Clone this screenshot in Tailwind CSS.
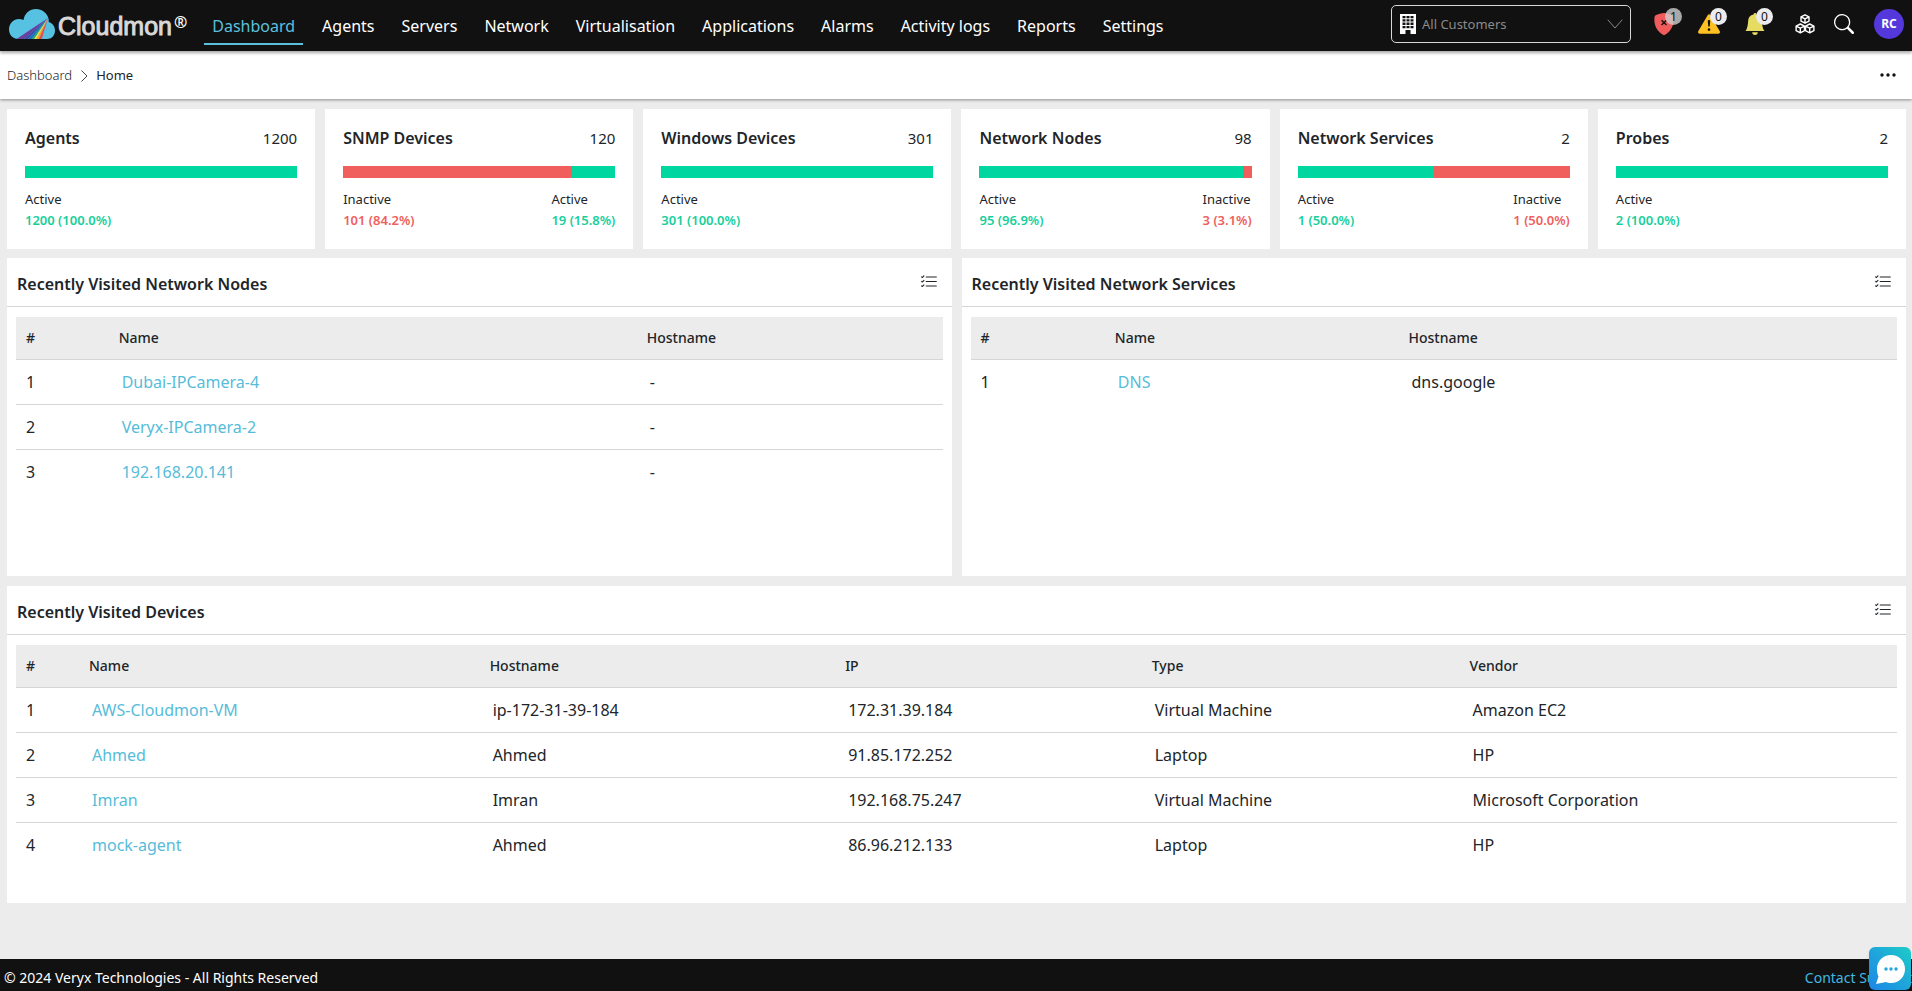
<!DOCTYPE html>
<html lang="en">
<head>
  <meta charset="UTF-8" />
  <meta name="viewport" content="width=device-width, initial-scale=1.0"/>
  <title>Cloudmon - Dashboard</title>
  <script src="https://cdn.jsdelivr.net/npm/@tailwindcss/browser@4"></script>
</head>
<body class="bg-[#ececec] min-h-screen flex flex-col text-[#212529] font-['Noto_Sans',sans-serif]">

  <!-- Shared icons -->
  <svg class="hidden">
    <symbol id="list-check" viewBox="0 0 16 16">
      <path fill="currentColor" fill-rule="evenodd" d="M5 11.5a.5.5 0 0 1 .5-.5h9a.5.5 0 0 1 0 1h-9a.5.5 0 0 1-.5-.5zm0-4a.5.5 0 0 1 .5-.5h9a.5.5 0 0 1 0 1h-9a.5.5 0 0 1-.5-.5zm0-4a.5.5 0 0 1 .5-.5h9a.5.5 0 0 1 0 1h-9a.5.5 0 0 1-.5-.5zM3.854 2.146a.5.5 0 0 1 0 .708l-1.5 1.5a.5.5 0 0 1-.708 0l-.5-.5a.5.5 0 1 1 .708-.708L2 3.293l1.146-1.147a.5.5 0 0 1 .708 0zm0 4a.5.5 0 0 1 0 .708l-1.5 1.5a.5.5 0 0 1-.708 0l-.5-.5a.5.5 0 1 1 .708-.708L2 7.293l1.146-1.147a.5.5 0 0 1 .708 0zm0 4a.5.5 0 0 1 0 .708l-1.5 1.5a.5.5 0 0 1-.708 0l-.5-.5a.5.5 0 0 1 .708-.708l.146.147 1.146-1.147a.5.5 0 0 1 .708 0z"/>
    </symbol>
  </svg>

  <!-- Top Bar -->
  <header class="relative z-20 bg-[#111] text-white h-[51px] flex items-center pl-2 pr-2 pb-[3px] shadow-[0_2px_3px_rgba(0,0,0,0.35)]">
    <a href="#" class="flex items-center shrink-0">
      <svg class="w-12 h-8" viewBox="0 0 48 32" aria-hidden="true">
        <defs>
          <clipPath id="cloud"><path d="M10.500 31C4.500 31 1 26.500 1 21.500 1 15.500 5.500 11 11 11c1.500 0 3 .3 4.500 1C16.500 5.500 21.500 1 28 1c6 0 11 4 12.500 9.500 .3 1.500.3 2.500.2 3.500C44.500 15 47 18.500 47 22.500 47 27.500 43.500 31 39 31Z"/></clipPath>
        </defs>
        <g clip-path="url(#cloud)">
          <rect width="48" height="32" fill="#56c1e0"/>
          <path d="M40 10 7 32h8z" fill="#6b3fa0"/>
          <path d="M40 10 15 32h4z" fill="#4148a5"/>
          <path d="M40 10 19 32h4z" fill="#1f6fc0"/>
          <path d="M40 10 23 32h2.500z" fill="#2aa56b"/>
          <path d="M40 10 25.500 32h2.500z" fill="#f0e04a"/>
          <path d="M40 10 28 32h2.500z" fill="#f6a12c"/>
          <path d="M40 10 30.500 32h3z" fill="#ea4a50"/>
        </g>
      </svg>
      <span class="ml-[2px] pt-1 text-[25px] leading-8 text-[#d8d8d8] font-['Liberation_Sans',sans-serif] [-webkit-text-stroke:1px_#d8d8d8]">Cloudmon</span>
      <span class="ml-[2px] text-[16px] leading-4 font-semibold pb-1">®</span>
    </a>

    <nav class="flex gap-[11px] ml-[17px] pt-[2px] text-[16px] leading-6 whitespace-nowrap">
      <a href="#" class="px-2 pt-2 pb-[5px] border-b-2 border-[#5bc0de] text-[#5bc0de]">Dashboard</a>
      <a href="#" class="px-2 pt-2 hover:text-[#5bc0de]">Agents</a>
      <a href="#" class="px-2 pt-2 hover:text-[#5bc0de]">Servers</a>
      <a href="#" class="px-2 pt-2 hover:text-[#5bc0de]">Network</a>
      <a href="#" class="px-2 pt-2 hover:text-[#5bc0de]">Virtualisation</a>
      <a href="#" class="px-2 pt-2 hover:text-[#5bc0de]">Applications</a>
      <a href="#" class="px-2 pt-2 hover:text-[#5bc0de]">Alarms</a>
      <a href="#" class="px-2 pt-2 hover:text-[#5bc0de]">Activity logs</a>
      <a href="#" class="px-2 pt-2 hover:text-[#5bc0de]">Reports</a>
      <a href="#" class="px-2 pt-2 hover:text-[#5bc0de]">Settings</a>
    </nav>

    <div class="ml-auto flex items-center shrink-0">
      <!-- Customer picker -->
      <div class="relative">
        <svg class="absolute left-2 top-[9px] w-[18px] h-5 pointer-events-none" viewBox="0 0 18 20" aria-hidden="true">
          <path d="M1 0h16v20h-5.500v-4h-5v4H1z" fill="#fff"/>
          <path d="M3.500 2h3v2.300h-3zm4 0h3v2.300h-3zm4 0h3v2.300h-3zM3.500 5.300h3v2.300h-3zm4 0h3v2.300h-3zm4 0h3v2.300h-3zM3.500 8.600h3v2.300h-3zm4 0h3v2.300h-3zm4 0h3v2.300h-3zM3.500 11.900h3v2.300h-3zm4 0h3v2.300h-3zm4 0h3v2.300h-3z" fill="#111"/>
        </svg>
        <select aria-label="Customer" class="appearance-none w-60 h-[38px] pl-[30px] pr-8 pt-[2px] rounded-[5px] border border-[#d8d8d8] bg-[#111] text-[13px] text-[#8a8a8a]">
          <option>All Customers</option>
        </select>
        <svg class="absolute right-2 top-[11px] w-4 h-4 pointer-events-none" viewBox="0 0 16 16" fill="none" stroke="#8a8a8a" stroke-linecap="round" stroke-linejoin="round" aria-hidden="true"><path d="M1 4l7 8 7-8"/></svg>
      </div>

      <!-- Status counters -->
      <button type="button" aria-label="Critical alarms" class="relative ml-[22px] w-[22px] h-[22px]">
        <svg class="w-[22px] h-[22px]" viewBox="0 0 16 16" aria-hidden="true">
          <path fill="#f05c5c" d="M8 0c-.69 0-1.843.265-2.928.56-1.110.3-2.229.655-2.887.870a1.540 1.540 0 0 0-1.044 1.262c-.596 4.477.787 7.795 2.465 9.990a11.777 11.777 0 0 0 2.517 2.453c.386.273.744.482 1.048.625.280.132.581.240.829.240s.548-.108.829-.240a7.159 7.159 0 0 0 1.048-.625 11.775 11.775 0 0 0 2.517-2.453c1.678-2.195 3.061-5.513 2.465-9.990a1.541 1.541 0 0 0-1.044-1.263 62.467 62.467 0 0 0-2.887-.870C9.843.266 8.690 0 8 0z"/>
          <path stroke="#111" d="M6.200 5.200l3.600 3.600m0-3.600L6.200 8.800"/>
        </svg>
        <span class="absolute -top-[5px] left-[12px] w-[17px] h-[17px] rounded-full bg-[#d0d0d0]/80 text-[#111] text-[12px] leading-[17px] text-center">1</span>
      </button>
      <button type="button" aria-label="Warnings" class="relative ml-[23px] w-[22px] h-[22px]">
        <svg class="w-[22px] h-[22px]" viewBox="0 0 16 16" aria-hidden="true">
          <path fill="#ffc021" d="M8.982 1.566a1.130 1.130 0 0 0-1.960 0L.165 13.233c-.457.778.091 1.767.980 1.767h13.713c.889 0 1.438-.990.980-1.767L8.982 1.566z"/>
          <path fill="#111" d="M8 5c.535 0 .954.462.900.995l-.350 3.507a.552.552 0 0 1-1.100 0L7.100 5.995A.905.905 0 0 1 8 5zm.002 6a1 1 0 1 1 0 2 1 1 0 0 1 0-2z"/>
        </svg>
        <span class="absolute -top-[5px] left-[12px] w-[17px] h-[17px] rounded-full bg-[#ececec] text-[#111] text-[12px] leading-[17px] text-center">0</span>
      </button>
      <button type="button" aria-label="Notifications" class="relative ml-6 w-[22px] h-[22px]">
        <svg class="w-[22px] h-[22px]" viewBox="0 0 16 16" fill="#e6dc61" aria-hidden="true"><path d="M8 16a2 2 0 0 0 2-2H6a2 2 0 0 0 2 2zm.995-14.901a1 1 0 1 0-1.990 0A5.002 5.002 0 0 0 3 6c0 1.098-.500 6-2 7h14c-1.500-1-2-5.902-2-7 0-2.420-1.720-4.440-4.005-4.901z"/></svg>
        <span class="absolute -top-[5px] left-[12px] w-[17px] h-[17px] rounded-full bg-[#ececec] text-[#111] text-[12px] leading-[17px] text-center">0</span>
      </button>
      <button type="button" aria-label="Modules" class="ml-[29px]">
        <svg class="w-5 h-5" viewBox="0 0 20 20" fill="none" stroke="#fff" stroke-width="1.400" stroke-linejoin="round" aria-hidden="true">
          <path d="M10 .8l4 2v4.400l-4 2-4-2V2.800zM6 2.800l4 2 4-2M10 4.800v4.400"/>
          <path d="M5.300 10l4.200 2.100v4.600l-4.200 2.200-4.200-2.200v-4.600zM1.100 12.100l4.200 2.100 4.200-2.100M5.300 14.200v4.700"/>
          <path d="M14.700 10l4.200 2.100v4.600l-4.200 2.200-4.200-2.200v-4.600zM10.500 12.100l4.200 2.100 4.200-2.100M14.700 14.200v4.700"/>
        </svg>
      </button>
      <button type="button" aria-label="Search" class="ml-[19px]">
        <svg class="w-5 h-5" viewBox="0 0 16 16" fill="#fff" aria-hidden="true"><path d="M11.742 10.344a6.500 6.500 0 1 0-1.397 1.398h-.001c.030.040.062.078.098.115l3.850 3.850a1 1 0 0 0 1.415-1.414l-3.850-3.850a1.007 1.007 0 0 0-.115-.100zM12 6.500a5.500 5.500 0 1 1-11 0 5.500 5.500 0 0 1 11 0z"/></svg>
      </button>
      <button type="button" aria-label="Account" class="ml-5 w-[30px] h-[30px] rounded-full bg-[#5438dc] text-[12px] font-bold">RC</button>
    </div>
  </header>

  <!-- Breadcrumb -->
  <div class="relative z-10 bg-white h-12 flex items-center justify-between pl-[7px] pr-4 text-[13px] shadow-[0_1px_3px_rgba(0,0,0,0.4)]">
    <nav class="flex items-center pt-px">
      <a href="#" class="font-light">Dashboard</a>
      <svg class="w-3 h-3 mx-[6px]" viewBox="0 0 12 12" fill="none" stroke="#444" aria-hidden="true"><path d="M3.500.5L9 6l-5.500 5.500"/></svg>
      <span>Home</span>
    </nav>
    <button type="button" aria-label="More">
      <svg class="w-4 h-4" viewBox="0 0 16 16" fill="#111" aria-hidden="true"><circle cx="2" cy="8" r="1.700"/><circle cx="8" cy="8" r="1.700"/><circle cx="14" cy="8" r="1.700"/></svg>
    </button>
  </div>

  <main class="pt-[10px] pb-14 pl-[7px] pr-[6px]">
    <!-- Summary Cards -->
    <div class="grid grid-cols-6 gap-[10px]">
      <section class="bg-white px-[18px] pt-[18px] pb-[19px]">
        <div class="flex justify-between text-[16px] leading-[22px]"><h2 class="font-semibold">Agents</h2><span class="text-[15px]">1200</span></div>
        <div class="flex h-3 mt-[17px]"><div class="bg-[#00d69f]" style="width:100%"></div></div>
        <div class="flex justify-between mt-[10px] text-[13px]">
          <div><p class="leading-[22px]">Active</p><p class="leading-5 font-semibold text-[#18cf9c]">1200 (100.0%)</p></div>
        </div>
      </section>
      <section class="bg-white px-[18px] pt-[18px] pb-[19px]">
        <div class="flex justify-between text-[16px] leading-[22px]"><h2 class="font-semibold">SNMP Devices</h2><span class="text-[15px]">120</span></div>
        <div class="flex h-3 mt-[17px]"><div class="bg-[#f05f5c]" style="width:84.2%"></div><div class="bg-[#00d69f]" style="width:15.8%"></div></div>
        <div class="flex justify-between mt-[10px] text-[13px]">
          <div><p class="leading-[22px]">Inactive</p><p class="leading-5 font-semibold text-[#f05f5c]">101 (84.2%)</p></div>
          <div><p class="leading-[22px]">Active</p><p class="leading-5 font-semibold text-[#18cf9c]">19 (15.8%)</p></div>
        </div>
      </section>
      <section class="bg-white px-[18px] pt-[18px] pb-[19px]">
        <div class="flex justify-between text-[16px] leading-[22px]"><h2 class="font-semibold">Windows Devices</h2><span class="text-[15px]">301</span></div>
        <div class="flex h-3 mt-[17px]"><div class="bg-[#00d69f]" style="width:100%"></div></div>
        <div class="flex justify-between mt-[10px] text-[13px]">
          <div><p class="leading-[22px]">Active</p><p class="leading-5 font-semibold text-[#18cf9c]">301 (100.0%)</p></div>
        </div>
      </section>
      <section class="bg-white px-[18px] pt-[18px] pb-[19px]">
        <div class="flex justify-between text-[16px] leading-[22px]"><h2 class="font-semibold">Network Nodes</h2><span class="text-[15px]">98</span></div>
        <div class="flex h-3 mt-[17px]"><div class="bg-[#00d69f]" style="width:96.9%"></div><div class="bg-[#f05f5c]" style="width:3.1%"></div></div>
        <div class="flex justify-between mt-[10px] text-[13px]">
          <div><p class="leading-[22px]">Active</p><p class="leading-5 font-semibold text-[#18cf9c]">95 (96.9%)</p></div>
          <div><p class="leading-[22px]">Inactive</p><p class="leading-5 font-semibold text-[#f05f5c]">3 (3.1%)</p></div>
        </div>
      </section>
      <section class="bg-white px-[18px] pt-[18px] pb-[19px]">
        <div class="flex justify-between text-[16px] leading-[22px]"><h2 class="font-semibold">Network Services</h2><span class="text-[15px]">2</span></div>
        <div class="flex h-3 mt-[17px]"><div class="bg-[#00d69f]" style="width:50%"></div><div class="bg-[#f05f5c]" style="width:50%"></div></div>
        <div class="flex justify-between mt-[10px] text-[13px]">
          <div><p class="leading-[22px]">Active</p><p class="leading-5 font-semibold text-[#18cf9c]">1 (50.0%)</p></div>
          <div><p class="leading-[22px]">Inactive</p><p class="leading-5 font-semibold text-[#f05f5c]">1 (50.0%)</p></div>
        </div>
      </section>
      <section class="bg-white px-[18px] pt-[18px] pb-[19px]">
        <div class="flex justify-between text-[16px] leading-[22px]"><h2 class="font-semibold">Probes</h2><span class="text-[15px]">2</span></div>
        <div class="flex h-3 mt-[17px]"><div class="bg-[#00d69f]" style="width:100%"></div></div>
        <div class="flex justify-between mt-[10px] text-[13px]">
          <div><p class="leading-[22px]">Active</p><p class="leading-5 font-semibold text-[#18cf9c]">2 (100.0%)</p></div>
        </div>
      </section>
    </div>

    <div class="grid grid-cols-2 gap-[10px] mt-[9px]">
      <!-- Recently Visited Network Nodes -->
      <section class="bg-white min-h-[318px]">
        <div class="flex items-center justify-between h-[49px] pl-[10px] pr-[14px] border-b border-[#d6d6d6]">
          <h2 class="text-[16px] leading-6 font-semibold pt-1">Recently Visited Network Nodes</h2>
          <button type="button" aria-label="Choose columns"><svg class="w-[18px] h-[18px]"><use href="#list-check"/></svg></button>
        </div>
        <div class="px-[9px] pt-[10px]">
          <table class="w-full table-fixed text-left text-[16px]">
            <thead class="bg-[#ececec] text-[14px]">
              <tr class="h-[42px] border-b border-[#d6d6d6]">
                <th class="w-[10%] pl-[10px] font-medium">#</th>
                <th class="w-[57%] pl-[10px] font-medium">Name</th>
                <th class="pl-[10px] font-medium">Hostname</th>
              </tr>
            </thead>
            <tbody>
              <tr class="h-[45px] border-b border-[#d6d6d6]"><td class="pl-[10px]">1</td><td class="pl-[13px]"><a href="#" class="text-[#56bcd9]">Dubai-IPCamera-4</a></td><td class="pl-[13px]">-</td></tr>
              <tr class="h-[45px] border-b border-[#d6d6d6]"><td class="pl-[10px]">2</td><td class="pl-[13px]"><a href="#" class="text-[#56bcd9]">Veryx-IPCamera-2</a></td><td class="pl-[13px]">-</td></tr>
              <tr class="h-[45px]"><td class="pl-[10px]">3</td><td class="pl-[13px]"><a href="#" class="text-[#56bcd9]">192.168.20.141</a></td><td class="pl-[13px]">-</td></tr>
            </tbody>
          </table>
        </div>
      </section>

      <!-- Recently Visited Network Services -->
      <section class="bg-white min-h-[318px]">
        <div class="flex items-center justify-between h-[49px] pl-[10px] pr-[14px] border-b border-[#d6d6d6]">
          <h2 class="text-[16px] leading-6 font-semibold pt-1">Recently Visited Network Services</h2>
          <button type="button" aria-label="Choose columns"><svg class="w-[18px] h-[18px]"><use href="#list-check"/></svg></button>
        </div>
        <div class="px-[9px] pt-[10px]">
          <table class="w-full table-fixed text-left text-[16px]">
            <thead class="bg-[#ececec] text-[14px]">
              <tr class="h-[42px] border-b border-[#d6d6d6]">
                <th class="w-[14.5%] pl-[10px] font-medium">#</th>
                <th class="w-[31.7%] pl-[10px] font-medium">Name</th>
                <th class="pl-[10px] font-medium">Hostname</th>
              </tr>
            </thead>
            <tbody>
              <tr class="h-[45px]"><td class="pl-[10px]">1</td><td class="pl-[13px]"><a href="#" class="text-[#56bcd9]">DNS</a></td><td class="pl-[13px]">dns.google</td></tr>
            </tbody>
          </table>
        </div>
      </section>
    </div>

    <!-- Recently Visited Devices -->
    <section class="bg-white min-h-[317px] mt-[10px]">
      <div class="flex items-center justify-between h-[49px] pl-[10px] pr-[14px] border-b border-[#d6d6d6]">
        <h2 class="text-[16px] leading-6 font-semibold pt-1">Recently Visited Devices</h2>
        <button type="button" aria-label="Choose columns"><svg class="w-[18px] h-[18px]"><use href="#list-check"/></svg></button>
      </div>
      <div class="px-[9px] pt-[10px]">
        <table class="w-full table-fixed text-left text-[16px]">
          <thead class="bg-[#ececec] text-[14px]">
            <tr class="h-[42px] border-b border-[#d6d6d6]">
              <th class="w-[3.35%] pl-[10px] font-medium">#</th>
              <th class="w-[21.3%] pl-[10px] font-medium">Name</th>
              <th class="w-[18.9%] pl-[10px] font-medium">Hostname</th>
              <th class="w-[16.3%] pl-[10px] font-medium">IP</th>
              <th class="w-[16.9%] pl-[10px] font-medium">Type</th>
              <th class="pl-[10px] font-medium">Vendor</th>
            </tr>
          </thead>
          <tbody>
            <tr class="h-[45px] border-b border-[#d6d6d6]"><td class="pl-[10px]">1</td><td class="pl-[13px]"><a href="#" class="text-[#56bcd9]">AWS-Cloudmon-VM</a></td><td class="pl-[13px]">ip-172-31-39-184</td><td class="pl-[13px]">172.31.39.184</td><td class="pl-[13px]">Virtual Machine</td><td class="pl-[13px]">Amazon EC2</td></tr>
            <tr class="h-[45px] border-b border-[#d6d6d6]"><td class="pl-[10px]">2</td><td class="pl-[13px]"><a href="#" class="text-[#56bcd9]">Ahmed</a></td><td class="pl-[13px]">Ahmed</td><td class="pl-[13px]">91.85.172.252</td><td class="pl-[13px]">Laptop</td><td class="pl-[13px]">HP</td></tr>
            <tr class="h-[45px] border-b border-[#d6d6d6]"><td class="pl-[10px]">3</td><td class="pl-[13px]"><a href="#" class="text-[#56bcd9]">Imran</a></td><td class="pl-[13px]">Imran</td><td class="pl-[13px]">192.168.75.247</td><td class="pl-[13px]">Virtual Machine</td><td class="pl-[13px]">Microsoft Corporation</td></tr>
            <tr class="h-[45px]"><td class="pl-[10px]">4</td><td class="pl-[13px]"><a href="#" class="text-[#56bcd9]">mock-agent</a></td><td class="pl-[13px]">Ahmed</td><td class="pl-[13px]">86.96.212.133</td><td class="pl-[13px]">Laptop</td><td class="pl-[13px]">HP</td></tr>
          </tbody>
        </table>
      </div>
    </section>
  </main>

  <!-- Footer -->
  <footer class="mt-auto bg-[#111] text-white h-8 flex items-center justify-between pl-1 pt-1 text-[14px]">
    <span>© 2024 Veryx Technologies - All Rights Reserved</span>
    <a href="#" class="text-[#41b8e0]">Contact Support</a>
  </footer>

  <!-- Chat widget -->
  <button type="button" aria-label="Open chat" class="fixed z-30 right-px bottom-px w-[42px] h-[43px] rounded-md bg-linear-to-tr from-[#1e86e6] via-[#1fa5da] to-[#20cdc6] shadow-md flex items-center justify-center">
    <svg class="w-8 h-8" viewBox="0 0 32 32" aria-hidden="true">
      <path fill="#fff" d="M17 2c8 0 14 6 14 14s-6 14-14 14c-2 0-3.500-.3-5-1L2 31l2.500-7.500C3.500 21.500 3 19 3 16 3 8 9 2 17 2z"/>
      <g fill="#22a5dc"><circle cx="12" cy="16" r="1.700"/><circle cx="17" cy="16" r="1.700"/><circle cx="22" cy="16" r="1.700"/></g>
    </svg>
  </button>

</body>
</html>
